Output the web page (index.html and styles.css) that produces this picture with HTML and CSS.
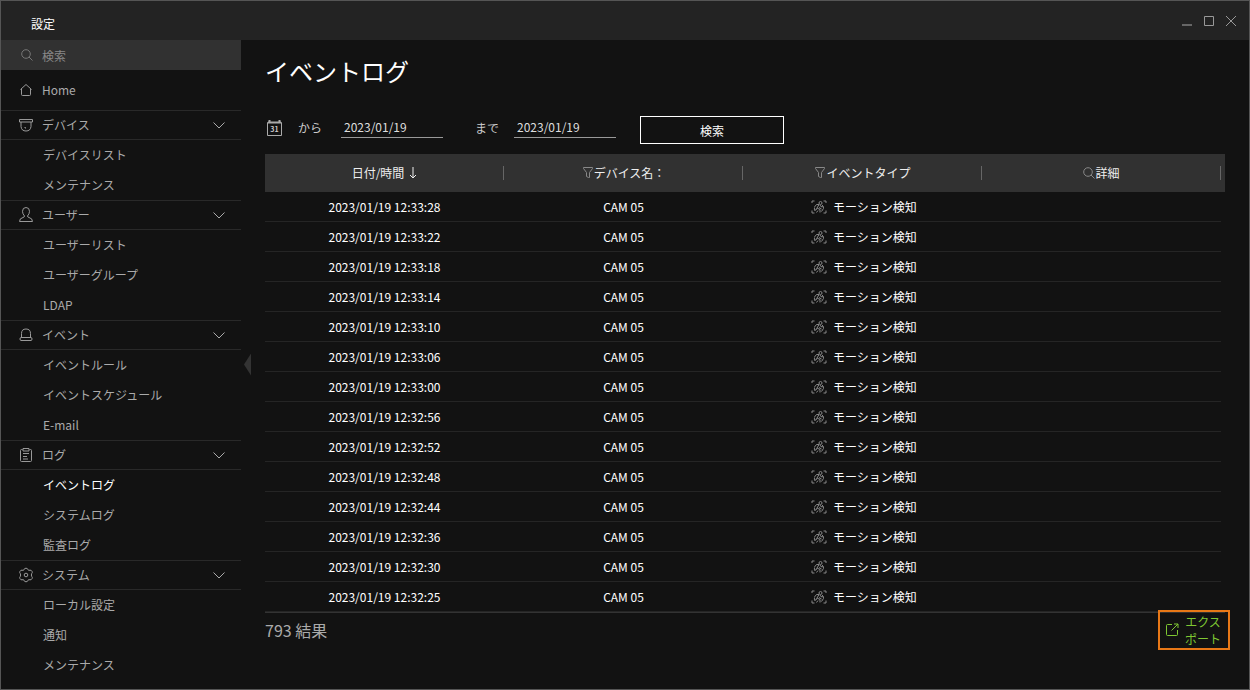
FILE: index.html
```html
<!DOCTYPE html>
<html lang="ja">
<head>
<meta charset="utf-8">
<title>設定 - イベントログ</title>
<link rel="stylesheet" href="styles.css">
</head>
<body>
<svg class="sprite" aria-hidden="true">
  <symbol id="i-search" viewBox="0 0 12 12"><circle cx="5" cy="5" r="4.3"/><path d="M8 8l3.500 3.500"/></symbol>
  <symbol id="i-chevron" viewBox="0 0 12 8"><path d="M.5 1.500l5.500 5.500L11.500 1.500"/></symbol>
  <symbol id="i-filter" viewBox="0 0 10 12"><path d="M.5.5h9v1L6.500 5.500v5h-1l-2-1V5.500L.5 1.500z"/></symbol>
  <symbol id="i-motion" viewBox="0 0 16 14"><path d="M1 3V1h2.500M12.500 1H15v2M1 10.500v2.500h2.500M15 10.500v2.500h-2.500"/><circle cx="9.500" cy="3" r="1.500"/><path d="M3.500 7l2-2.500 2.500 0L6 8l3 1.500v3M6 8l-1 2H3M9 5l1 1.700h2M4 10.500q-1-1-.5-3M5.500 12.500l1.500-2M11 5q2 1.200 1.500 3.500l-2 3M8 7.500l2.500 1.500"/></symbol>
</svg>
<div class="window">
  <header class="titlebar">
    <span class="titlebar-name">設定</span>
    <div class="window-controls">
      <button type="button" aria-label="最小化"><svg width="12" height="12" viewBox="0 0 12 12"><path d="M1 10h10" stroke-width="2" stroke="#666"/></svg></button>
      <button type="button" aria-label="最大化"><svg width="12" height="12" viewBox="0 0 12 12"><path d="M1.500 1.500h9v9h-9z"/></svg></button>
      <button type="button" aria-label="閉じる"><svg width="12" height="12" viewBox="0 0 12 12"><path d="M1 1l10 10M11 1L1 11"/></svg></button>
    </div>
  </header>
  <div class="body">
    <aside class="sidebar">
      <label class="side-search">
        <svg width="12" height="12"><use href="#i-search"/></svg>
        <input type="text" placeholder="検索" aria-label="検索">
      </label>
      <nav>
        <a class="home" href="#"><svg width="14" height="14" viewBox="0 0 14 14"><path d="M1.500 6.500L7 1.500l5.500 5M2.500 5.800v5.700q0 1 1 1h7q1 0 1-1V5.800"/></svg>Home</a>

        <button type="button" class="group"><svg width="14" height="14" viewBox="0 0 14 14"><path d="M.5 1.500h13v2.500H.5zM2 4v4.500Q2.500 13 7 13t5-4.500V4"/><path d="M5.500 9.500h1v1"/></svg><span>デバイス</span><svg class="chevron"><use href="#i-chevron"/></svg></button>
        <ul><li><a href="#">デバイスリスト</a></li><li><a href="#">メンテナンス</a></li></ul>

        <button type="button" class="group"><svg width="14" height="14" viewBox="0 0 14 14" overflow="visible"><path d="M5.500 8Q3.500 6 3.500 3.300 3.500-.5 7-.5t3.500 3.800Q10.500 6 8.500 8q0 1.200 1.500 1.500 3.500.8 3.500 4H.5q0-3.200 3.500-4Q5.500 9.200 5.500 8z"/></svg><span>ユーザー</span><svg class="chevron"><use href="#i-chevron"/></svg></button>
        <ul><li><a href="#">ユーザーリスト</a></li><li><a href="#">ユーザーグループ</a></li><li><a href="#">LDAP</a></li></ul>

        <button type="button" class="group"><svg width="14" height="14" viewBox="0 0 14 14"><path d="M2.500 9.500V5.500Q2.500 1 7 1T11.500 5.500v4M2 9.500h10q1 0 1 1.500t-1 1.500H2q-1 0-1-1.500t1-1.500z"/></svg><span>イベント</span><svg class="chevron"><use href="#i-chevron"/></svg></button>
        <ul><li><a href="#">イベントルール</a></li><li><a href="#">イベントスケジュール</a></li><li><a href="#">E-mail</a></li></ul>

        <button type="button" class="group"><svg width="14" height="14" viewBox="0 0 14 14"><path d="M3.500 1.500H2.500q-1 0-1 1v10q0 1 1 1h9q1 0 1-1v-10q0-1-1-1h-1M4 .5h6v2.500H4zM4 5.500h6M4 8.500h4M4 11h5"/></svg><span>ログ</span><svg class="chevron"><use href="#i-chevron"/></svg></button>
        <ul><li><a class="active" href="#">イベントログ</a></li><li><a href="#">システムログ</a></li><li><a href="#">監査ログ</a></li></ul>

        <button type="button" class="group"><svg width="14" height="14" viewBox="0 0 14 14" overflow="visible"><path d="M5 1.800Q5.300.2 7 .2t2 1.600q.8.900 2 .4 1.200-.3 2 1.100.8 1.300-.3 2.300-.7 1.400 0 2.800 1.100 1 .3 2.300-.8 1.400-2 1.100-1.200-.5-2 .4-.3 1.600-2 1.600t-2-1.600q-.8-.9-2-.4-1.200.3-2-1.100-.8-1.300.3-2.300.7-1.400 0-2.800-1.100-1-.3-2.300.8-1.400 2-1.100 1.200.5 2-.4z"/><circle cx="7" cy="7" r="1.800"/></svg><span>システム</span><svg class="chevron"><use href="#i-chevron"/></svg></button>
        <ul><li><a href="#">ローカル設定</a></li><li><a href="#">通知</a></li><li><a href="#">メンテナンス</a></li></ul>
      </nav>
      <button type="button" class="collapse" aria-label="サイドバーを閉じる"></button>
    </aside>
    <main>
      <h1>イベントログ</h1>
      <form class="filters">
        <svg class="calendar" width="17" height="17" viewBox="0 0 17 17"><path d="M1.500 2.500h14v13h-14z"/><path d="M2 2.500h13M3.500 0v3M13.500 0v3" stroke-width="2"/><text x="8.500" y="12">31</text></svg>
        <label for="from">から</label>
        <input id="from" type="text" value="2023/01/19">
        <label for="to" class="to">まで</label>
        <input id="to" type="text" value="2023/01/19">
        <button type="button" class="search">検索</button>
      </form>
      <table>
        <colgroup><col><col><col><col><col class="edge"></colgroup>
        <thead>
          <tr>
            <th><button type="button">日付/時間<svg class="sort" width="8" height="14" viewBox="0 0 8 14"><path d="M4 1v11M1 9l3 3 3-3"/></svg></button></th>
            <th><button type="button"><svg width="12" height="12"><use href="#i-filter"/></svg>デバイス名：</button></th>
            <th><button type="button"><svg width="12" height="12"><use href="#i-filter"/></svg>イベントタイプ</button></th>
            <th><button type="button"><svg width="12" height="12"><use href="#i-search"/></svg>詳細</button></th>
            <td></td>
          </tr>
        </thead>
        <tbody id="rows"></tbody>
      </table>
      <footer>
        <span>793 結果</span>
        <button type="button" class="export"><svg width="14" height="14" viewBox="0 0 14 14"><path d="M7 1.500H2.500q-1 0-1 1V11.500q0 1 1 1h9q1 0 1-1V7M6.500 7.500L13 1M9 1h4v4"/></svg><span>エクスポート</span></button>
      </footer>
    </main>
  </div>
</div>
<script src="app.js"></script>
</body>
</html>
```

FILE: styles.css
```css
* { box-sizing: border-box; }

body {
  margin: 0;
  background: #121212;
  color: #eee;
  font: 12px/18px "Noto Sans CJK JP", sans-serif;
}

button, input { font: inherit; color: inherit; background: none; border: 0; padding: 0; margin: 0; outline: 0; }
button { cursor: pointer; }
a { color: inherit; text-decoration: none; }
ul { list-style: none; margin: 0; padding: 0; }
svg { fill: none; stroke: #999; stroke-width: 1; flex: none; }
.sprite { display: none; }

.window {
  min-height: 100vh;
  display: flex;
  flex-direction: column;
  border: 1px solid #555;
}

.titlebar {
  height: 39px;
  display: flex;
  justify-content: space-between;
  align-items: center;
  padding: 5px 12px 0 30px;
  background: #232323;
}
.titlebar-name { color: #fff; padding-top: 1px; }
.window-controls { display: flex; gap: 10px; padding-bottom: 4px; }
.window-controls button, .window-controls svg { display: block; }

.body { flex: 1; display: flex; }

.sidebar { position: relative; width: 240px; flex: none; color: #aaa; }
.side-search {
  display: flex;
  align-items: center;
  gap: 9px;
  height: 30px;
  padding-left: 20px;
  background: #313131;
}
.side-search svg { stroke: #777; }
.side-search input { width: 160px; padding-top: 2px; }
.side-search input::placeholder { color: #888; opacity: 1; }

.home {
  display: flex;
  align-items: center;
  gap: 9px;
  height: 40px;
  padding-left: 18px;
}
.group {
  display: flex;
  align-items: center;
  gap: 9px;
  width: 100%;
  height: 30px;
  padding: 0 16px 0 18px;
  border: solid #292929;
  border-width: 1px 0;
}
.group span { flex: 1; text-align: left; }
.chevron { width: 12px; height: 8px; stroke: #aaa; }
.sidebar li a { display: block; padding: 6px 0 6px 42px; }
.sidebar .active { color: #fff; }

.collapse {
  position: absolute;
  top: 50%;
  right: -10px;
  width: 7px;
  height: 22px;
  margin-top: -11px;
  background: #333;
  clip-path: polygon(0 50%, 100% 0, 100% 100%);
}

main { flex: 1; min-width: 0; padding: 13px 24px 24px; }
h1 { margin: 0; font-size: 24px; line-height: 36px; font-weight: 400; color: #fff; }

.filters { display: flex; align-items: center; height: 28px; margin: 27px 0 10px; }
.filters label { width: 43px; color: #ccc; padding-bottom: 4px; }
.filters .to { width: 39px; margin-left: 32px; }
.filters input {
  width: 102px;
  height: 22px;
  padding: 0 3px;
  margin-bottom: 6px;
  border-bottom: 1px solid #999;
  color: #ddd;
}
.calendar { margin: 0 15px 4px 1px; stroke: #aaa; }
.calendar text { fill: #ccc; stroke: none; font: bold 7px "Noto Sans CJK JP", sans-serif; text-anchor: middle; }
.search { width: 144px; height: 28px; margin-left: 24px; padding-top: 2px; border: 1px solid #fff; color: #fff; }

table { width: 100%; border-collapse: separate; border-spacing: 0; table-layout: fixed; }
.edge { width: 4px; }
th, td { padding: 0; text-align: center; }
thead { background: #313131; }
th {
  height: 38px;
  font-weight: 400;
  background: linear-gradient(#666, #666) right center / 1px 14px no-repeat;
}
th button { display: inline-flex; align-items: center; }
th svg { stroke: #888; }
th .sort { margin-left: 5px; stroke: #eee; }
tbody td { height: 30px; padding-top: 1px; border-bottom: 1px solid #252525; color: #fff; }
tbody td:last-child { border: 0; }
.type { display: inline-flex; align-items: center; gap: 6px; padding-left: 3px; vertical-align: top; }
.type svg { stroke: #888; }

footer {
  display: flex;
  justify-content: space-between;
  align-items: flex-start;
  border-top: 1px solid #333;
  font-size: 16px;
  line-height: 24px;
  color: #aaa;
}
footer > span { padding-top: 5px; }
.export {
  display: flex;
  align-items: center;
  gap: 6px;
  width: 72px;
  height: 40px;
  margin: -3px -5px 0 0;
  padding: 0 5px;
  border: 2px solid #e87817;
  color: #7fc832;
  font-size: 12px;
  line-height: 17px;
}
.export svg { stroke: #7fc832; }
.export span { width: 36px; }
```

FILE: app.js
```js
const times = ["33:28", "33:22", "33:18", "33:14", "33:10", "33:06", "33:00", "32:56", "32:52", "32:48", "32:44", "32:36", "32:30", "32:25"];
document.getElementById("rows").innerHTML = times.map(t => `
  <tr>
    <td>2023/01/19 12:${t}</td>
    <td>CAM 05</td>
    <td><span class="type"><svg width="16" height="14"><use href="#i-motion"/></svg>モーション検知</span></td>
    <td></td>
    <td></td>
  </tr>`).join("");
```
